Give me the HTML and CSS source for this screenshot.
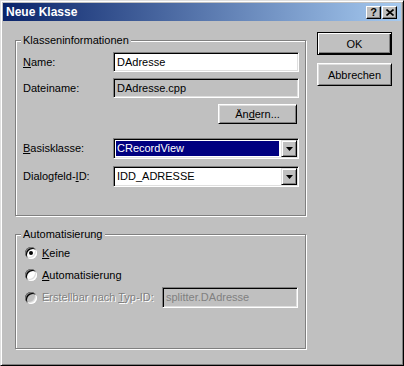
FILE: index.html
```html
<!DOCTYPE html>
<html lang="de">
<head>
    <meta charset="UTF-8">
    <meta name="viewport" content="width=device-width, initial-scale=1.0">
    <title>Neue Klasse</title>
    <link rel="stylesheet" href="styles.css">
</head>
<body>
    <!-- Dialogfenster -->
    <div class="window">
        <div class="titlebar">
            <span class="title">Neue Klasse</span>
            <div class="caption-buttons">
                <span class="cap-btn cap-help">?</span>
                <span class="cap-btn">
                    <svg width="8" height="7" viewBox="0 0 8 7"><path d="M0.5 0.5 L7.5 6.5 M7.5 0.5 L0.5 6.5" stroke="#000" stroke-width="1.6"/></svg>
                </span>
            </div>
        </div>

        <div class="client">
            <div class="groups">
                <!-- Klasseninformationen -->
                <div class="group group-info">
                    <span class="legend">Klasseninformationen</span>
                    <div class="field-row">
                        <label><u>N</u>ame:</label>
                        <div class="edit">DAdresse</div>
                    </div>
                    <div class="field-row row-file">
                        <label>Dateiname:</label>
                        <div class="edit readonly">DAdresse.cpp</div>
                    </div>
                    <div class="field-row row-change">
                        <button class="btn btn-change">Än<u>d</u>ern...</button>
                    </div>
                    <div class="field-row row-base">
                        <label><u>B</u>asisklasse:</label>
                        <div class="combo">
                            <span class="combo-text selected">CRecordView</span>
                            <span class="combo-arrow"><svg width="7" height="4" viewBox="0 0 7 4"><polygon points="0,0 7,0 3.5,4" fill="#000"/></svg></span>
                        </div>
                    </div>
                    <div class="field-row row-dialog">
                        <label>Dialogfeld-<u>I</u>D:</label>
                        <div class="combo">
                            <span class="combo-text">IDD_ADRESSE</span>
                            <span class="combo-arrow"><svg width="7" height="4" viewBox="0 0 7 4"><polygon points="0,0 7,0 3.5,4" fill="#000"/></svg></span>
                        </div>
                    </div>
                </div>

                <!-- Automatisierung -->
                <div class="group group-auto">
                    <span class="legend">Automatisierung</span>
                    <div class="radio-row">
                        <span class="radio checked"></span>
                        <span><u>K</u>eine</span>
                    </div>
                    <div class="radio-row row-auto">
                        <span class="radio"></span>
                        <span><u>A</u>utomatisierung</span>
                    </div>
                    <div class="radio-row row-typeid disabled">
                        <span class="radio"></span>
                        <span class="typeid-label">Erstellbar nach <u>T</u>yp-ID:</span>
                        <div class="edit readonly typeid-edit">splitter.DAdresse</div>
                    </div>
                </div>
            </div>

            <!-- Schaltflächen -->
            <div class="buttons">
                <button class="btn btn-default">OK</button>
                <button class="btn">Abbrechen</button>
            </div>
        </div>
    </div>
</body>
</html>
```

FILE: styles.css
```css
/* Grundeinstellungen */
* {
    box-sizing: border-box;
}

body {
    margin: 0;
    background: #c0c0c0;
    font-family: "Liberation Sans", Arial, sans-serif;
    font-size: 11px;
    line-height: 13px;
    color: #000;
}

u {
    text-decoration-thickness: 1px;
    text-underline-offset: 1px;
}

/* Fensterrahmen */
.window {
    width: 404px;
    height: 366px;
    padding: 2px;
    background: #c0c0c0;
    border: 1px solid;
    border-color: #dfdfdf #000 #000 #dfdfdf;
    box-shadow: inset 1px 1px #fff, inset -1px -1px #808080;
}

/* Titelleiste */
.titlebar {
    height: 18px;
    display: flex;
    align-items: center;
    padding: 0 4px 0 3px;
    background: linear-gradient(to right, #0a246a, #a6caf0);
}

.title {
    flex: 1;
    color: #fff;
    font-weight: bold;
    font-size: 12px;
}

.caption-buttons {
    display: flex;
    gap: 1px;
}

.cap-btn {
    width: 15px;
    height: 13px;
    display: flex;
    align-items: center;
    justify-content: center;
    background: #c0c0c0;
    border: 1px solid;
    border-color: #fff #000 #000 #fff;
    box-shadow: inset -1px -1px #808080;
}

.cap-help {
    font-weight: bold;
    font-size: 11px;
}

/* Inhalt */
.client {
    display: flex;
    align-items: flex-start;
    padding-left: 12px;
}

.groups {
    width: 291px;
    margin-top: 19px;
    display: flex;
    flex-direction: column;
    gap: 18px;
}

/* Gruppenrahmen */
.group {
    position: relative;
    border: 1px solid #808080;
    box-shadow: inset 1px 1px #fff, 1px 1px #fff;
}

.legend {
    position: absolute;
    top: -7px;
    left: 5px;
    padding: 0 2px;
    background: #c0c0c0;
}

.group-info {
    height: 176px;
    padding: 11px 0 0 7px;
}

.group-auto {
    height: 115px;
    padding: 10px 0 0 9px;
}

/* Zeilen mit Beschriftung */
.field-row {
    width: 276px;
    display: flex;
    align-items: center;
}

.field-row label {
    width: 90px;
}

.row-file {
    margin-top: 6px;
}

.row-change {
    margin-top: 6px;
    justify-content: flex-end;
    padding-right: 2px;
}

.row-base {
    margin-top: 14px;
}

.row-dialog {
    margin-top: 7px;
}

/* Eingabefelder */
.edit {
    width: 186px;
    height: 20px;
    padding: 0 3px;
    display: flex;
    align-items: center;
    background: #fff;
    border: 1px solid;
    border-color: #808080 #fff #fff #808080;
    box-shadow: inset 1px 1px #000, inset -1px -1px #dfdfdf;
}

.edit.readonly {
    background: #c0c0c0;
}

/* Kombinationsfelder */
.combo {
    width: 186px;
    height: 21px;
    padding: 1px;
    display: flex;
    align-items: stretch;
    background: #fff;
    border: 1px solid;
    border-color: #808080 #fff #fff #808080;
    box-shadow: inset 1px 1px #000, inset -1px -1px #dfdfdf;
}

.combo-text {
    flex: 1;
    margin: 1px 2px 1px 1px;
    padding-left: 1px;
    display: flex;
    align-items: center;
}

.combo-text.selected {
    background: #000080;
    color: #fff;
}

.combo-arrow {
    width: 16px;
    display: flex;
    align-items: center;
    justify-content: center;
    background: #c0c0c0;
    border: 1px solid;
    border-color: #dfdfdf #000 #000 #dfdfdf;
    box-shadow: inset 1px 1px #fff, inset -1px -1px #808080;
}

/* Schaltflächen */
.buttons {
    margin: 11px 0 0 11px;
    display: flex;
    flex-direction: column;
    gap: 8px;
}

.btn {
    width: 75px;
    height: 23px;
    padding: 0;
    font-family: inherit;
    font-size: 11px;
    color: #000;
    background: #c0c0c0;
    border: 1px solid;
    border-color: #fff #000 #000 #fff;
    box-shadow: inset 1px 1px #dfdfdf, inset -1px -1px #808080;
}

.btn-default {
    border-color: #000;
    box-shadow: inset 1px 1px #fff, inset -1px -1px #000, inset -2px -2px #808080;
}

.btn-change {
    width: 79px;
    height: 20px;
}

/* Optionsfelder */
.radio-row {
    height: 16px;
    display: flex;
    align-items: center;
    gap: 5px;
}

.row-auto {
    margin-top: 6px;
}

.row-typeid {
    height: 21px;
    margin-top: 4px;
}

.radio {
    position: relative;
    width: 12px;
    height: 12px;
    flex: none;
    border-radius: 50%;
    background: #fff;
    box-shadow: inset 1px 1px #808080, inset -1px -1px #fff, inset 2px 2px #000, inset -2px -2px #dfdfdf;
}

.radio.checked::after {
    content: "";
    position: absolute;
    left: 4px;
    top: 4px;
    width: 4px;
    height: 4px;
    border-radius: 50%;
    background: #000;
}

.disabled .radio {
    background: #c0c0c0;
}

.disabled {
    color: #808080;
}

.typeid-label {
    width: 120px;
    text-shadow: 1px 1px #fff;
}

.typeid-edit {
    width: 136px;
    height: 21px;
    margin-left: -5px;
}
```
